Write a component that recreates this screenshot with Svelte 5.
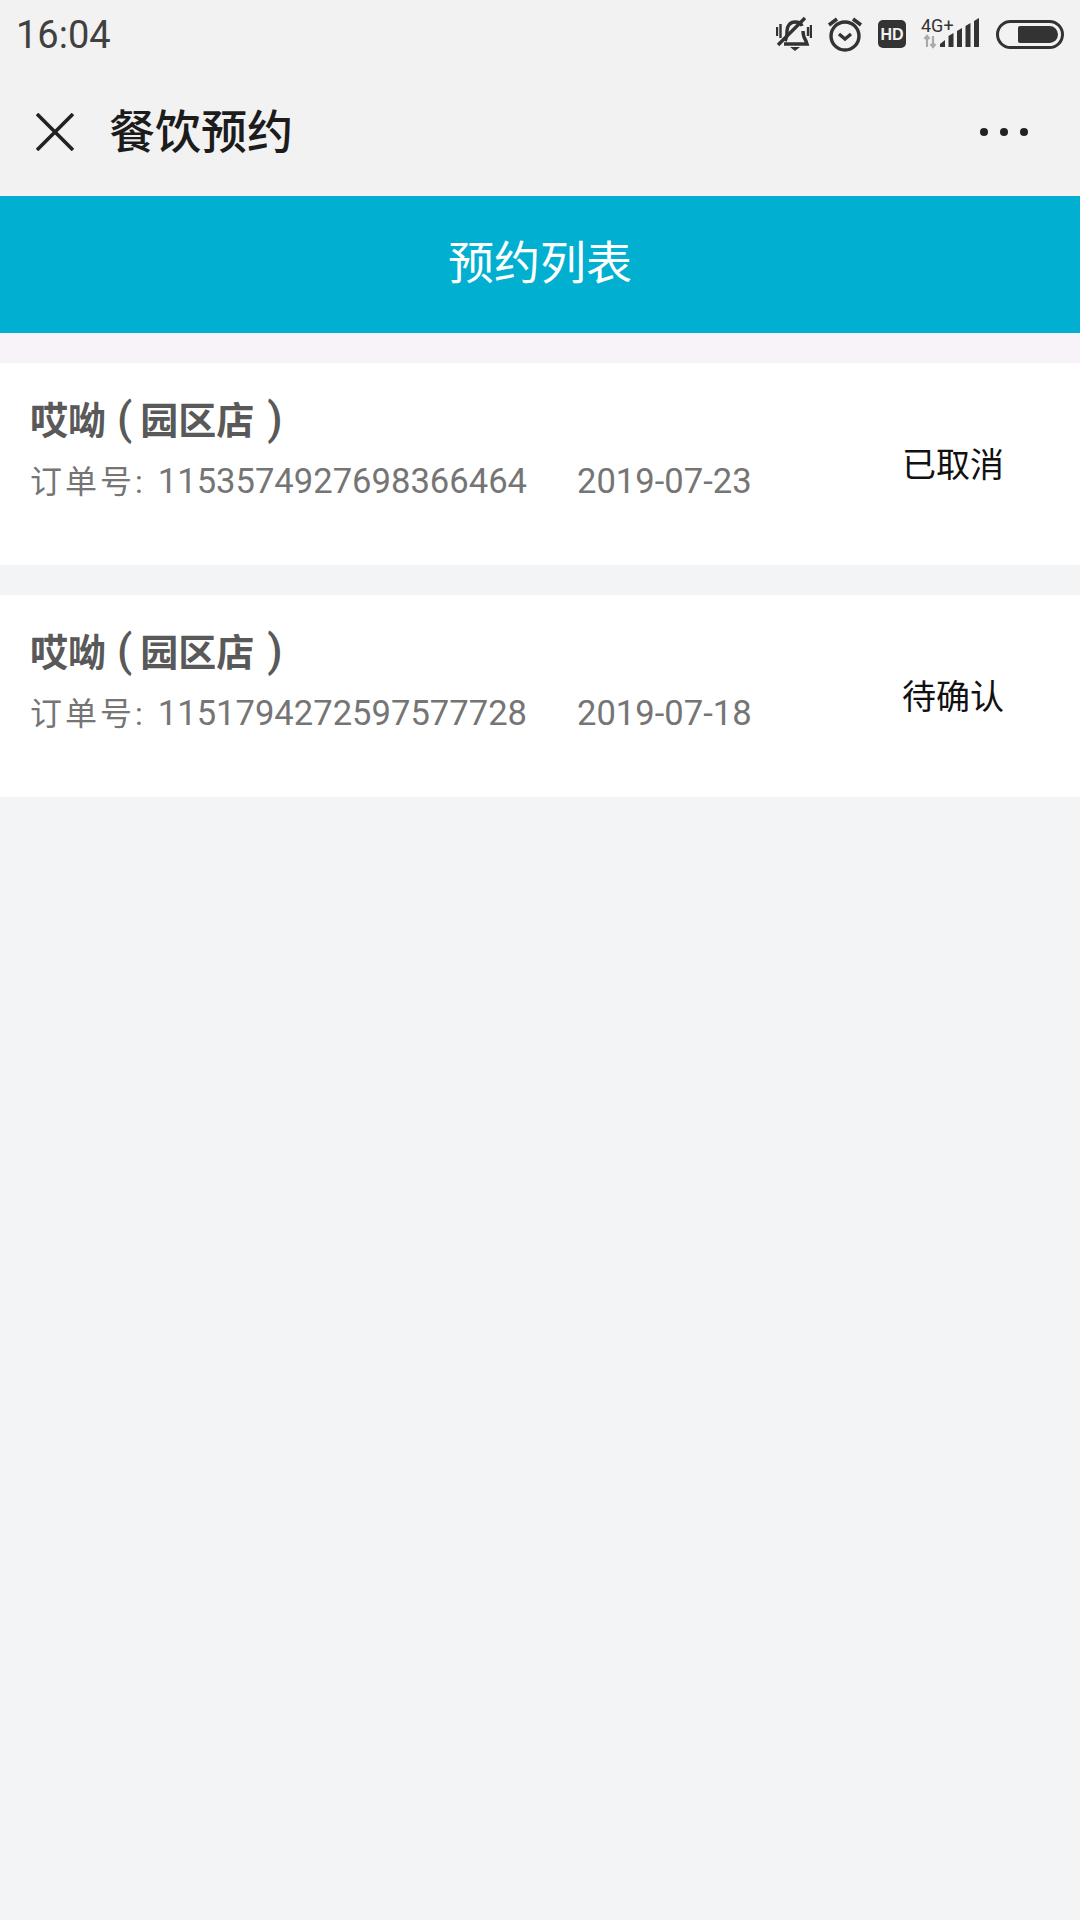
<script lang="ts">
  const orders = [
    { shop: "哎呦", branch: "园区店", no: "1153574927698366464", date: "2019-07-23", status: "已取消" },
    { shop: "哎呦", branch: "园区店", no: "1151794272597577728", date: "2019-07-18", status: "待确认" }
  ];
</script>

<div class="page">
  <div class="status-bar">
    <span class="time">16:04</span>
    <div class="status-icons">
      <svg width="36" height="36" viewBox="0 0 36 36" fill="none" stroke="#333" stroke-width="3.400">
        <path d="M9 25c2-3 2-6 2-10 0-5 3-9 8-9 3 0 6 1 7 4M27 15c0 4 1 7 3 10l1 3H8" />
        <path d="M14 31h10l-5 4z" fill="#333" stroke="none" />
        <path d="M2 29 29 2" />
        <path d="M1 11v9M4.500 8v14M32 11v9M35 9v13" stroke-width="2.400" />
      </svg>
      <svg width="36" height="36" viewBox="0 0 36 36" fill="none" stroke="#333" stroke-width="3.400">
        <circle cx="18" cy="20" r="14" />
        <path d="M12 18l6 5 6-5" />
        <path d="M2 9l8-6M34 9l-8-6" stroke-width="3.600" />
      </svg>
      <svg class="hd" width="28" height="28" viewBox="0 0 28 28">
        <rect width="28" height="28" rx="5" fill="#333" />
        <text x="14" y="20" text-anchor="middle">HD</text>
      </svg>
      <svg class="signal" width="60" height="40" viewBox="0 -4 60 40">
        <text x="0" y="14">4G+</text>
        <path d="M6 18v11M3.500 21 6 18l2.500 3M12 18v11M9.500 26l2.500 3 2.500-3" stroke="#aaa" stroke-width="2.200" fill="none" />
        <path d="M19 29v-3l5-4v7zM27.500 29V18l5-3v14zM36 29V13l5-3v19zM44.500 29V8l5-3v24zM53 29V3l5-3v29z" fill="#333" />
      </svg>
      <div class="battery"><div class="battery-level"></div></div>
    </div>
  </div>

  <div class="nav">
    <svg class="close" width="38" height="38" viewBox="0 0 38 38" stroke="#222" stroke-width="3.600">
      <path d="M1 1l36 36M37 1 1 37" />
    </svg>
    <span class="nav-title">餐饮预约</span>
    <div class="more"><i></i><i></i><i></i></div>
  </div>

  <header class="banner"><span>预约列表</span></header>

  <div class="list">
    {#each orders as order}
      <div class="order">
        <div class="info">
          <div class="name">{order.shop}<span class="paren open">(</span>{order.branch}<span class="paren close-paren">)</span></div>
          <div class="meta">
            <span class="no"><span class="no-label">订单号:</span>{order.no}</span>
            <span>{order.date}</span>
          </div>
        </div>
        <div class="state">{order.status}</div>
      </div>
    {/each}
  </div>
</div>

<style>
  :global(body) {
    background: #f3f4f6;
  }

  .page {
    height: 1920px;
    background: #f3f4f6;
    font-family: Roboto, "Noto Sans CJK SC", sans-serif;
    overflow: hidden;
  }

  .status-bar {
    height: 68px;
    background: #f2f2f2;
    display: flex;
    align-items: center;
    justify-content: space-between;
    padding: 2px 16px 0;
    box-sizing: border-box;
  }

  .time {
    font-size: 38px;
    color: #404040;
  }

  .status-icons {
    display: flex;
    align-items: center;
    gap: 15px;
    margin-top: -2px;
  }

  .hd text {
    font: 700 16px "Liberation Sans", sans-serif;
    fill: #f2f2f2;
  }

  .signal text {
    font: 18px Roboto, sans-serif;
    fill: #333;
  }

  .battery {
    width: 68px;
    height: 29px;
    box-sizing: border-box;
    border: 3.500px solid #333;
    border-radius: 15px;
    padding: 3px;
    display: flex;
    justify-content: flex-end;
  }

  .battery-level {
    width: 40px;
    background: #333;
    border-radius: 2px 9px 9px 2px;
  }

  .nav {
    height: 128px;
    background: #f2f2f2;
    display: flex;
    align-items: center;
    padding: 0 52px 0 36px;
  }

  .close {
    margin-right: 35px;
  }

  .nav-title {
    font-size: 46px;
    font-weight: 500;
    line-height: 60px;
    color: #1c1c1c;
  }

  .more {
    margin-left: auto;
    display: flex;
    gap: 12px;
  }

  .more i {
    width: 8px;
    height: 8px;
    border-radius: 50%;
    background: #222;
  }

  .banner {
    height: 137px;
    background: #01b0d0;
    color: #fff;
    font-size: 46px;
    display: flex;
    align-items: center;
    justify-content: center;
  }

  .banner span {
    margin-bottom: 12px;
  }

  .list {
    display: flex;
    flex-direction: column;
    gap: 30px;
    padding-top: 30px;
    background: linear-gradient(#f8f2f9 30px, transparent 30px);
  }

  .order {
    height: 202px;
    background: #fff;
    display: flex;
    align-items: center;
    justify-content: space-between;
    padding: 0 76px 4px 30px;
    box-sizing: border-box;
  }

  .info {
    align-self: flex-start;
    padding-top: 31px;
  }

  .name {
    font-size: 38px;
    font-weight: 700;
    line-height: 54px;
    color: #595959;
  }

  .paren {
    font-size: 44px;
    font-weight: 500;
    line-height: 0;
  }

  .open {
    margin: 0 8px 0 11px;
  }

  .close-paren {
    margin-left: 13px;
  }

  .meta {
    display: flex;
    gap: 50px;
    margin-top: 8px;
    font-size: 34.600px;
    line-height: 50px;
    color: #757575;
  }

  .no-label {
    font-size: 32px;
    margin-right: 12px;
    letter-spacing: 3px;
  }

  .state {
    font-size: 34px;
    color: #111;
  }
</style>
